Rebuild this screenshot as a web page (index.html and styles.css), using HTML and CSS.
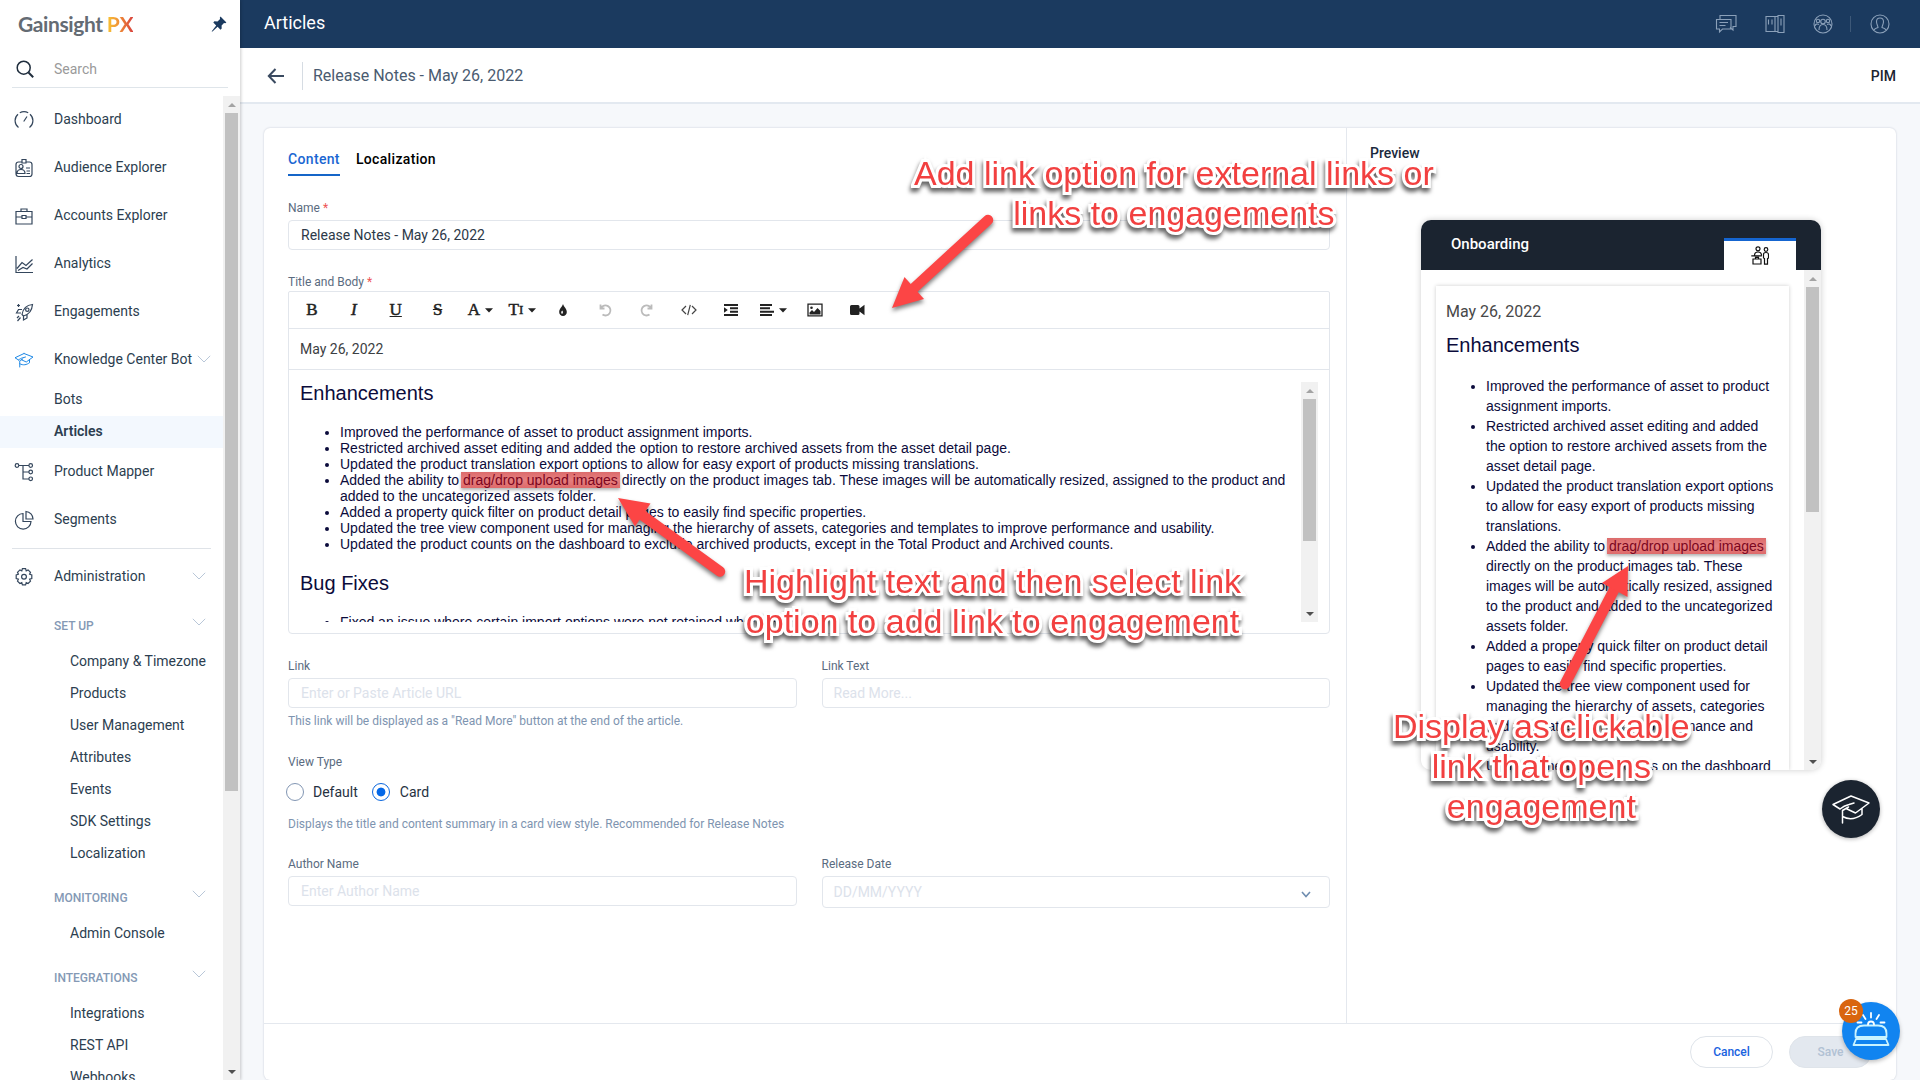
FILE: index.html
```html
<!DOCTYPE html>
<html lang="en">
	<head>
		<meta charset="UTF-8" />
		<meta name="viewport" content="width=device-width, initial-scale=1.0" />
		<title>Articles - Gainsight PX</title>
		<link rel="stylesheet" href="styles.css" />
	</head>
	<body>
		<!-- shared shapes -->
		<svg class="defs" width="0" height="0">
			<symbol id="chevron" viewBox="0 0 14 8">
				<path d="M.8.8 7 7 13.2.8" fill="none" stroke="currentColor" stroke-width="1" />
			</symbol>
			<symbol id="caret" viewBox="0 0 8 5">
				<path d="M0 .3h8L4 4.6z" fill="currentColor" />
			</symbol>
			<symbol id="cap" viewBox="0 0 40 30">
				<path d="M20 2 38 9 24.500 19 15 14.500M20 2 2 10.500 9 15M9 15c3-2.500 5-3.500 9-4.500l5-1.500M11.500 29V16.500l6-3.500M11.500 22.500c7 4 14 2 19.500-2V14.500" fill="none" stroke="currentColor" stroke-linejoin="round" stroke-linecap="round" />
			</symbol>
		</svg>

		<aside class="sidebar">
			<div class="brand">
				<div class="logo">Gainsight<span>PX</span></div>
				<svg width="16" height="16" viewBox="0 0 16 16" fill="#1b3a5f">
					<path d="M9.500.6 15.400 6.500 14.200 7.200 13 6.900 10.600 9.500 10.700 12.600 9.500 13.700 6.600 10.800 1.500 15.500.6 15.400 5.200 9.400 2.300 6.500 3.400 5.300 6.500 5.400 9.100 3 8.800 1.800z" />
				</svg>
			</div>
			<div class="search">
				<svg width="18" height="18" viewBox="0 0 18 18" fill="none" stroke="#1f2d3d" stroke-width="1.500">
					<circle cx="7.700" cy="7.700" r="6.500" />
					<path d="m12.500 12.500 4.700 4.700" stroke-width="2" />
				</svg>
				<span>Search</span>
			</div>
			<div class="sidebar-body">
				<nav class="nav">
					<a class="nav-item">
						<svg class="icon" viewBox="0 0 20 20"><path d="M4.500 17.500A8.600 8.600 0 0 1 4 4.200M5.800 2.800a8.600 8.600 0 0 1 8.400 0M16 4.200a8.600 8.600 0 0 1-.5 13.300M9.700 11.500l3.300-5" /></svg>
						Dashboard
					</a>
					<a class="nav-item">
						<svg class="icon" viewBox="0 0 20 20"><path d="M8 4H4.500C3 4 2 5 2 6.500v9C2 17 3 18.500 4.500 18.500h11c1.500 0 2.500-1 2.500-2.500V6.500C18 5 17 4 15.500 4H12M8 1.500h4V5H8zM3 15.500c0-3 1.500-4 4-4s4 1 4 4zM12 10h4M12.500 13H16M12.500 15.500H16" /><circle cx="7" cy="8.500" r="2" /></svg>
						Audience Explorer
					</a>
					<a class="nav-item">
						<svg class="icon" viewBox="0 0 20 20"><path d="M2 5.500h16V18H2zM7 5.500V3h6v2.500M2 11h6M12 11h6M8 9.500h4v3H8z" /></svg>
						Accounts Explorer
					</a>
					<a class="nav-item">
						<svg class="icon" viewBox="0 0 20 20"><path d="M2 2v16.500h17M3 14.500 8 8.500l4 3 6.500-6M4 16.500l5-3 4 1.500 5.500-5.500" /></svg>
						Analytics
					</a>
					<a class="nav-item">
						<svg class="icon" viewBox="0 0 20 20"><path d="M8 12.500C9 7 12.500 3 18.500 2.500 18 8.500 15 12.500 9.500 14zM8 7.500H4.500L2.500 11H7M13 12.500v3.500l-3.500 2v-4M5 14l-2 2M6.500 15.500 3.500 19M3 3.500h3M4.500 2v3" /><circle cx="13.300" cy="7.700" r="1.700" /></svg>
						Engagements
					</a>
					<a class="nav-item">
						<svg class="icon blue"><use href="#cap" y="2" height="16" width="20" /></svg>
						Knowledge Center Bot
						<svg class="chev near"><use href="#chevron" /></svg>
					</a>
					<a class="nav-sub">Bots</a>
					<a class="nav-sub active">Articles</a>
					<a class="nav-item">
						<svg class="icon" viewBox="0 0 20 20"><path d="M5 3.500h10M9 3.500V17h6M9 10h6" /><circle cx="3" cy="3.500" r="1.800" /><circle cx="16.700" cy="3.500" r="1.800" /><circle cx="16.700" cy="10" r="1.800" /><circle cx="16.700" cy="16.800" r="1.800" /></svg>
						Product Mapper
					</a>
					<a class="nav-item">
						<svg class="icon" viewBox="0 0 20 20"><path d="M9 3.500a7.800 7.800 0 1 0 8 8H9z" /><path d="M12 1.500V9h7a7.500 7.500 0 0 0-7-7.500z" /></svg>
						Segments
					</a>
					<hr />
					<a class="nav-item admin">
						<svg class="icon" viewBox="0 0 20 20"><path d="M8.400 1.700h3.200l.6 2.100 1.900-.9 2.400 2.400-.9 1.900 2.200.7v3.600l-2.200.7.9 1.900-2.400 2.400-1.900-.9-.6 2.200H8.400l-.6-2.200-1.900.9-2.400-2.400.9-1.900-2.200-.7V7.900l2.200-.7-.9-1.900 2.400-2.400 1.900.9z" /><circle cx="10" cy="9.700" r="2.400" /></svg>
						Administration
						<svg class="chev"><use href="#chevron" /></svg>
					</a>
					<div class="nav-head first">SET UP <svg class="chev"><use href="#chevron" /></svg></div>
					<a class="nav-sub deep">Company &amp; Timezone</a>
					<a class="nav-sub deep">Products</a>
					<a class="nav-sub deep">User Management</a>
					<a class="nav-sub deep">Attributes</a>
					<a class="nav-sub deep">Events</a>
					<a class="nav-sub deep">SDK Settings</a>
					<a class="nav-sub deep">Localization</a>
					<div class="nav-head">MONITORING <svg class="chev"><use href="#chevron" /></svg></div>
					<a class="nav-sub deep">Admin Console</a>
					<div class="nav-head">INTEGRATIONS <svg class="chev"><use href="#chevron" /></svg></div>
					<a class="nav-sub deep">Integrations</a>
					<a class="nav-sub deep">REST API</a>
					<a class="nav-sub deep">Webhooks</a>
				</nav>
				<div class="scrollbar"><i class="up"></i><b style="height: 678px"></b><i class="down"></i></div>
			</div>
		</aside>

		<main class="main">
			<header class="topbar">
				<h1>Articles</h1>
				<div class="topbar-icons">
					<svg width="22" height="20" viewBox="0 0 22 20"><path d="M5 5V1.500h16v11h-3V16l-3-2.500M1.500 5.500H16v9.500H7.500L4.500 18v-3h-3zM4.500 8.500h8.500M4.500 11.500h6" /></svg>
					<svg width="20" height="20" viewBox="0 0 20 20"><path d="M1 2.500h9v15H1zM10 2.500h3v15h-3M13 1.500h6v17h-6zM3.500 5.500v5M7 5.500v5M16 4.500v7" /></svg>
					<svg width="20" height="20" viewBox="0 0 20 20"><circle cx="10" cy="10" r="9" /><circle cx="10" cy="7.500" r="2.300" /><circle cx="5" cy="7" r="1.700" /><circle cx="15" cy="7" r="1.700" /><path d="M6 16c0-4 1.500-5.500 4-5.500s4 1.500 4 5.500M2 12c.5-2 2-2.500 4-1.500M18 12c-.5-2-2-2.500-4-1.500" /></svg>
					<span class="sep"></span>
					<svg width="20" height="20" viewBox="0 0 20 20"><circle cx="10" cy="10" r="9" /><path d="M10 4c-2.300 0-3.500 1.500-3.500 3.800S8 12 8 13.500C6 14 4.500 14.500 4 16M10 4c2.300 0 3.500 1.500 3.500 3.800S12 12 12 13.500c2 .5 3.500 1 4 2.500" /></svg>
				</div>
			</header>
			<div class="crumbs">
				<svg width="18" height="16" viewBox="0 0 18 16" fill="none" stroke="#3a4a60" stroke-width="2"><path d="M17 8H2M8.500 1 1.800 8l6.700 7" /></svg>
				<span class="crumb-title">Release Notes - May 26, 2022</span>
				<span class="tenant">PIM</span>
			</div>

			<section class="card">
				<div class="columns">
					<div class="form">
						<div class="tabs">
							<a class="tab active">Content</a>
							<a class="tab">Localization</a>
						</div>

						<label class="label name-label">Name <em>*</em></label>
						<div class="input">Release Notes - May 26, 2022</div>

						<label class="label">Title and Body <em>*</em></label>
						<div class="editor">
							<div class="toolbar">
								<span class="tool serif">B</span>
								<span class="tool serif"><i>I</i></span>
								<span class="tool serif"><u>U</u></span>
								<span class="tool serif"><s>S</s></span>
								<span class="tool serif drop">A<svg class="caret"><use href="#caret" /></svg></span>
								<span class="tool serif drop"><span>T<small>I</small></span><svg class="caret"><use href="#caret" /></svg></span>
								<span class="tool"><svg width="10" height="14" viewBox="0 0 10 14"><path d="M5 1c.8 3 3.800 4.500 3.800 8A3.800 3.800 0 0 1 5 13 3.800 3.800 0 0 1 1.200 9C1.200 5.500 4.200 4 5 1z" fill="#222" /><path d="M4.300 7.500c-1.300 1-1.500 2.500-.3 3.500 1.200-.8 1.200-2 .3-3.500z" fill="#fff" /></svg></span>
								<span class="tool faint"><svg width="14" height="14" viewBox="0 0 14 14"><path d="M2.500 1.500v4h4M3 5.200A5 5 0 1 1 4.500 11.500" /></svg></span>
								<span class="tool faint"><svg width="14" height="14" viewBox="0 0 14 14"><path d="M11.500 1.500v4h-4M11 5.200A5 5 0 1 0 9.500 11.500" /></svg></span>
								<span class="tool"><svg width="16" height="12" viewBox="0 0 16 12" fill="none" stroke="#444" stroke-width="1.200"><path d="M5 2 1 6l4 4M11 2l4 4-4 4M9.300.8 6.700 11.200" /></svg></span>
								<span class="tool"><svg width="16" height="14" viewBox="0 0 16 14" fill="#222"><path d="M1 1h14v2H1zM7 4.300h8v2H7zM7 7.700h8v2H7zM1 11h14v2H1zM1 4.300 4.800 7 1 9.700z" /></svg></span>
								<span class="tool drop"><svg width="14" height="14" viewBox="0 0 14 14" fill="#222"><path d="M0 1h12v2H0zM0 4.300h10v2H0zM0 7.700h14v2H0zM0 11h12v2H0z" /></svg><svg class="caret"><use href="#caret" /></svg></span>
								<span class="tool"><svg width="16" height="14" viewBox="0 0 16 14"><path d="M1 1.200h14v11.600H1z" fill="none" stroke="#222" stroke-width="1.300" /><circle cx="4.500" cy="4.700" r="1.300" fill="#222" /><path d="M2.500 11.500V9.500L5 7l2 2 3.500-4L13.500 8v3.500z" fill="#222" /></svg></span>
								<span class="tool"><svg width="16" height="12" viewBox="0 0 16 12" fill="#222"><path d="M2.500 1H9a1.500 1.500 0 0 1 1.500 1.500V4.500L15.500.8v10.400l-5-3.700v2A1.500 1.500 0 0 1 9 11H2.500A1.500 1.500 0 0 1 1 9.500v-7A1.500 1.500 0 0 1 2.500 1z" /></svg></span>
							</div>
							<div class="editor-title">May 26, 2022</div>
							<div class="editor-body">
								<div class="rich">
									<h2>Enhancements</h2>
									<ul>
										<li>Improved the performance of asset to product assignment imports.</li>
										<li>Restricted archived asset editing and added the option to restore archived assets from the asset detail page.</li>
										<li>Updated the product translation export options to allow for easy export of products missing translations.</li>
										<li>Added the ability to <mark>drag/drop upload images</mark> directly on the product images tab. These images will be automatically resized, assigned to the product and added to the uncategorized assets folder.</li>
										<li>Added a property quick filter on product detail pages to easily find specific properties.</li>
										<li>Updated the tree view component used for managing the hierarchy of assets, categories and templates to improve performance and usability.</li>
										<li>Updated the product counts on the dashboard to exclude archived products, except in the Total Product and Archived counts.</li>
									</ul>
									<h2>Bug Fixes</h2>
									<ul>
										<li>Fixed an issue where certain import options were not retained when reviewing.</li>
									</ul>
								</div>
								<div class="scrollbar"><i class="up"></i><b style="height: 142px"></b><i class="down"></i></div>
							</div>
						</div>

						<div class="row">
							<div>
								<label class="label">Link</label>
								<div class="input empty">Enter or Paste Article URL</div>
							</div>
							<div>
								<label class="label">Link Text</label>
								<div class="input empty short">Read More...</div>
							</div>
						</div>
						<p class="hint">This link will be displayed as a "Read More" button at the end of the article.</p>

						<label class="label view-label">View Type</label>
						<div class="radios">
							<span class="radio"></span>Default
							<span class="radio on"></span>Card
						</div>
						<p class="hint view-hint">Displays the title and content summary in a card view style. Recommended for Release Notes</p>

						<div class="row">
							<div>
								<label class="label">Author Name</label>
								<div class="input empty">Enter Author Name</div>
							</div>
							<div>
								<label class="label">Release Date</label>
								<div class="input empty short date">
									DD/MM/YYYY
									<svg width="10" height="7" viewBox="0 0 10 7" fill="none" stroke="#6f8db0" stroke-width="1.600"><path d="m1 1 4 4.500L9 1" /></svg>
								</div>
							</div>
						</div>
					</div>

					<div class="preview">
						<div class="preview-label">Preview</div>
						<div class="bot">
							<div class="bot-head">
								<span>Onboarding</span>
								<div class="bot-tab">
									<svg width="18" height="19" viewBox="0 0 18 19" fill="none" stroke="#111" stroke-width="1.200"><circle cx="7" cy="2.800" r="2" /><circle cx="15" cy="3.500" r="1.800" /><path d="M3.500 9.500C3.500 7 5 6 7 6s3.500 1 3.500 3.500M.3 9.800h10.500M2 13h8v5H2zM4.500 13v-1.700h3V13M12.500 12V8.500C12.500 7 13.500 6.500 15 6.500s2.500.5 2.500 2V12l-1 .5v5.700h-3v-5.700z" /></svg>
								</div>
							</div>
							<div class="bot-body">
								<div class="bot-scroll">
									<div class="rich article">
										<div class="article-title">May 26, 2022</div>
										<h2>Enhancements</h2>
										<ul>
											<li>Improved the performance of asset to product assignment imports.</li>
											<li>Restricted archived asset editing and added the option to restore archived assets from the asset detail page.</li>
											<li>Updated the product translation export options to allow for easy export of products missing translations.</li>
											<li>Added the ability to <mark>drag/drop upload images</mark> directly on the product images tab. These images will be automatically resized, assigned to the product and added to the uncategorized assets folder.</li>
											<li>Added a property quick filter on product detail pages to easily find specific properties.</li>
											<li>Updated the tree view component used for managing the hierarchy of assets, categories and templates to improve performance and usability.</li>
											<li>Updated the product counts on the dashboard to exclude archived products, except in the Total Product and Archived counts.</li>
										</ul>
									</div>
								</div>
								<div class="scrollbar"><i class="up"></i><b style="height: 225px"></b><i class="down"></i></div>
							</div>
						</div>
						<div class="bot-button"><svg width="40" height="30"><use href="#cap" /></svg></div>
					</div>
				</div>

				<footer class="footer">
					<button class="btn">Cancel</button>
					<button class="btn disabled">Save</button>
				</footer>
			</section>
		</main>

		<!-- floating engagement bell -->
		<div class="bell">
			<svg width="38" height="34" viewBox="0 0 38 34" fill="none" stroke="#fff" stroke-width="1.800" stroke-linecap="round">
				<path d="M3.500 25v-3.500C3.500 16 7 13.500 12 13.500h14c5 0 8.500 2.500 8.500 8V25zM4 27h30l2.500 6h-35z" stroke="#c9f3ff" stroke-linejoin="round" />
				<path d="M16 12.500c0-2 1-3 3-3s3 1 3 3M19 1v4.500M11 3l2.500 4M27 3l-2.500 4M5.500 10.500h4M28.500 10.500h4" />
			</svg>
			<span class="badge">25</span>
		</div>

		<!-- annotations -->
		<div class="notes">
			<svg width="1920" height="1080" viewBox="0 0 1920 1080" fill="#fc4545" stroke="#fc4545">
				<g><path d="M914 288 988 220" stroke-width="10.500" stroke-linecap="round" /><path d="M892 308 904.500 277 924 299z" stroke="none" /></g>
				<g><path d="m642 515 78 56.500" stroke-width="10.500" stroke-linecap="round" /><path d="m618 498 32.500 5.500-15.500 23z" stroke="none" /></g>
				<g><path d="m1615 588-50 96" stroke-width="10.500" stroke-linecap="round" /><path d="m1628 566-26 17 25.500 14z" stroke="none" /></g>
			</svg>
			<p class="note note-add">Add link option for external links or<br />links to engagements</p>
			<p class="note note-highlight">Highlight text and then select link<br />option to add link to engagement</p>
			<p class="note note-display">Display as clickable<br />link that opens<br />engagement</p>
		</div>
	</body>
</html>
```
FILE: styles.css
```css
* {
	box-sizing: border-box;
}
body {
	display: flex;
	width: 1920px;
	height: 1080px;
	margin: 0;
	overflow: hidden;
	position: relative;
	background: #f6f8fb;
	color: #2c3e50;
	font: 14px/20px Roboto, sans-serif;
}
h1,
h2,
p,
ul {
	margin: 0;
}
svg {
	flex: none;
}
.defs {
	position: absolute;
}

/* sidebar */
.sidebar {
	width: 240px;
	height: 1080px;
	display: flex;
	flex-direction: column;
	background: #fff;
	box-shadow: 1px 0 3px rgba(0, 0, 0, 0.2);
	position: relative;
	z-index: 1;
}
.brand {
	height: 48px;
	padding: 0 13px 0 18px;
	display: flex;
	align-items: center;
	justify-content: space-between;
}
.logo {
	font: bold 21px/24px Lato, sans-serif;
	letter-spacing: -0.4px;
	color: #646b73;
}
.logo span {
	margin-left: 4px;
	letter-spacing: 0;
	background: linear-gradient(90deg, #f8c534, #ef8a36 50%, #d8413d);
	-webkit-background-clip: text;
	background-clip: text;
	color: transparent;
}
.search {
	height: 40px;
	margin: 0 12px 8px;
	padding: 2px 0 0 4px;
	display: flex;
	align-items: center;
	gap: 20px;
	border-bottom: 1px solid #dfe5ea;
	color: #9a9a9a;
}
.sidebar-body {
	flex: 1;
	min-height: 0;
	display: flex;
}
.nav {
	flex: 1;
	overflow: hidden;
	white-space: nowrap;
}
.nav-item {
	height: 48px;
	padding: 0 17px 2px 14px;
	display: flex;
	align-items: center;
}
.icon {
	width: 20px;
	height: 20px;
	margin: 2px 20px 0 0;
	fill: none;
	stroke: #34465c;
	stroke-width: 1.2;
}
.icon.blue {
	color: #1e88e5;
	stroke: none;
	stroke-width: 2;
}
.chev {
	width: 14px;
	height: 8px;
	margin-left: auto;
	color: #b9c7d8;
}
.chev.near {
	margin-right: -5px;
}
.nav-sub {
	display: block;
	height: 32px;
	padding-left: 54px;
	line-height: 30px;
}
.nav-sub.deep {
	padding-left: 70px;
}
.nav-sub.active {
	background: #f3f8fe;
	font-weight: 600;
}
.nav hr {
	margin: 4px 12px;
	border: 0;
	border-top: 1px solid #dfe3e8;
}
.nav-head {
	height: 48px;
	padding: 18px 17px 0 54px;
	display: flex;
	font-size: 12px;
	font-weight: 500;
	color: #8499b5;
}
.nav-head.first {
	height: 45px;
	padding-top: 15px;
}
.nav-head .chev {
	margin-top: 2px;
}

/* scrollbars */
.scrollbar {
	width: 17px;
	padding: 0 2px;
	display: flex;
	flex-direction: column;
	flex: none;
	background: #f1f1f1;
}
.scrollbar b {
	background: #c1c1c1;
}
.scrollbar i {
	height: 17px;
	display: flex;
	align-items: center;
	justify-content: center;
}
.scrollbar i::before {
	content: "";
	border: 4px solid transparent;
	border-top-width: 0;
	border-bottom-color: #a3a3a3;
}
.scrollbar .down {
	margin-top: auto;
}
.scrollbar .down::before {
	border-top: 4px solid #505050;
	border-bottom-width: 0;
}

/* header */
.main {
	flex: 1;
	display: flex;
	flex-direction: column;
	min-width: 0;
}
.topbar {
	height: 48px;
	padding: 0 30px 0 24px;
	display: flex;
	align-items: center;
	justify-content: space-between;
	background: #1b3a5f;
}
.topbar h1 {
	margin-top: -2px;
	font-size: 18px;
	font-weight: 400;
	color: #fff;
}
.topbar-icons {
	display: flex;
	align-items: center;
	gap: 28px;
	fill: none;
	stroke: #8ba0b9;
	stroke-width: 1.1;
}
.topbar-icons .sep {
	width: 1px;
	height: 16px;
	margin: 0 -9px 0 -11px;
	background: #3d5878;
}
.crumbs {
	height: 56px;
	padding: 1px 24px 0 27px;
	display: flex;
	align-items: center;
	background: #fff;
	border-bottom: 2px solid #e3e9f0;
}
.crumb-title {
	margin-left: 17px;
	padding-left: 10px;
	border-left: 1px solid #d6dce3;
	font-size: 16px;
	line-height: 28px;
	color: #4a5b70;
}
.tenant {
	margin-left: auto;
	color: #1b2430;
	font-weight: 500;
}

/* card */
.card {
	height: 952px;
	margin: 24px 24px 0;
	display: flex;
	flex-direction: column;
	background: #fff;
	border-radius: 6px;
	box-shadow: 0 0 2px rgba(40, 60, 90, 0.25);
}
.columns {
	flex: 1;
	min-height: 0;
	display: flex;
}
.form {
	width: 1083px;
	padding: 20px 16px 0 24px;
	border-right: 1px solid #e4e8ee;
}
.tabs {
	display: flex;
	gap: 16px;
}
.tab {
	height: 28px;
	line-height: 22px;
	font-weight: 500;
	letter-spacing: 0.34px;
	color: #000;
}
.tab.active {
	color: #1a66d2;
	border-bottom: 2px solid #1565c8;
}
.label {
	display: block;
	margin: 24px 0 4px;
	font-size: 12px;
	line-height: 16px;
	color: #5a6b80;
}
.label em {
	font-style: normal;
	color: #ee5555;
}
.input {
	height: 30px;
	padding: 0 12px;
	border: 1px solid #e2e6ec;
	border-radius: 4px;
	line-height: 28px;
	color: #2d3948;
}
.input.empty {
	color: #dce2eb;
}
.input.short {
	padding-left: 11px;
}
.date {
	height: 32px;
	padding-right: 18px;
	display: flex;
	justify-content: space-between;
	align-items: center;
}
.date svg {
	margin-top: 4px;
}
.editor {
	height: 343px;
	margin-top: -3px;
	display: flex;
	flex-direction: column;
	border: 1px solid #e2e6ec;
	border-radius: 2px 2px 4px 4px;
}
.toolbar {
	height: 37px;
	padding-left: 2px;
	display: flex;
	border-bottom: 1px solid #e2e6ec;
	color: #222;
}
.tool {
	width: 41.9px;
	display: flex;
	align-items: center;
	justify-content: center;
}
.serif {
	font: 17px/20px "Liberation Serif", serif;
	-webkit-text-stroke: 0.5px #222;
}
.serif small {
	font-size: 13px;
	vertical-align: 1px;
}
.drop {
	gap: 5px;
	padding-left: 2px;
}
.faint svg {
	fill: none;
	stroke: #bbb;
	stroke-width: 1.8;
}
.caret {
	width: 8px;
	height: 5px;
}
.editor-title {
	height: 41px;
	padding-left: 11px;
	line-height: 40px;
	border-bottom: 1px solid #e2e6ec;
	color: #3c4043;
}
.editor-body {
	height: 252px;
	padding: 12px 11px 0;
	display: flex;
}
.rich {
	flex: 1;
	overflow: hidden;
	font: 14px/16px "Liberation Sans", Arial, sans-serif;
	color: #0b0b3b;
}
.rich h2 {
	margin-bottom: 19px;
	font-size: 20px;
	line-height: 23px;
	font-weight: 400;
}
.rich ul {
	margin-bottom: 20px;
	padding-left: 40px;
}
.rich mark {
	margin: 0 -2px;
	padding: 0 2px;
	background: linear-gradient(#dc6b6b, #e57f7f 50%, #de6a6a);
	box-shadow: 0 2px 3px rgba(0, 0, 0, 0.3);
	color: #7c0620;
}
.row {
	display: grid;
	grid-template-columns: 1fr 1fr;
	gap: 25px;
}
.hint {
	margin-top: 5px;
	font-size: 12px;
	line-height: 16px;
	color: #7e94b0;
}
.view-label {
	margin: 25px 0 12px;
}
.radios {
	height: 20px;
	margin-left: -2px;
	display: flex;
	align-items: center;
	color: #26313f;
}
.radio {
	width: 18px;
	height: 18px;
	margin-right: 9px;
	border: 1px solid #8296b3;
	border-radius: 50%;
}
.radio.on {
	margin: 0 10px 0 14px;
	border-color: #0a66dd;
	background: radial-gradient(#0468e8 4px, #fff 4.8px);
}
.view-hint {
	margin-top: 14px;
}

/* preview */
.preview {
	flex: 1;
	padding: 15px 0 0 23px;
}
.preview-label {
	color: #1b2a3d;
	font-weight: 500;
}
.bot {
	width: 400px;
	height: 550px;
	margin: 57px 0 0 51px;
	overflow: hidden;
	border-radius: 10px;
	box-shadow: 0 0 6px rgba(0, 0, 0, 0.2);
}
.bot-head {
	height: 50px;
	padding: 0 25px 0 30px;
	display: flex;
	align-items: center;
	justify-content: space-between;
	background: #1b2430;
	color: #fff;
	font-size: 15px;
	font-weight: 500;
}
.bot-head span {
	margin-top: -2px;
}
.bot-tab {
	width: 72px;
	height: 32px;
	align-self: flex-end;
	display: flex;
	align-items: center;
	justify-content: center;
	background: #fff;
	border-top: 3px solid #1565d0;
}
.bot-body {
	height: 500px;
	display: flex;
}
.bot-scroll {
	flex: 1;
	padding: 16px 15px 0;
}
.article {
	height: 484px;
	padding: 16px 12px 0 10px;
	line-height: 20px;
	box-shadow: 0 0 4px rgba(0, 0, 0, 0.2);
}
.article-title {
	margin-bottom: 12px;
	font: 16px/20px Roboto, sans-serif;
	color: #484848;
}
.bot-button {
	width: 58px;
	height: 58px;
	margin: 10px 0 0 452px;
	display: flex;
	align-items: center;
	justify-content: center;
	border-radius: 50%;
	background: #1b2430;
	color: #fff;
	stroke-width: 1.5;
	box-shadow: 0 1px 4px rgba(0, 0, 0, 0.3);
}

.footer {
	height: 57px;
	padding: 12px 24px 0;
	display: flex;
	justify-content: flex-end;
	gap: 16px;
	border-top: 1px solid #e4e8ee;
}
.btn {
	width: 83px;
	height: 32px;
	padding: 0;
	border: 1px solid #dfe4ea;
	border-radius: 16px;
	background: #fff;
	font: 500 12px Roboto, sans-serif;
	color: #1a63e0;
}
.btn.disabled {
	background: #e3e8ef;
	color: #b1c1d4;
}

/* floating things */
.bell {
	position: absolute;
	left: 1842px;
	top: 1002px;
	width: 58px;
	height: 58px;
	padding-bottom: 4px;
	display: flex;
	align-items: center;
	justify-content: center;
	border-radius: 50%;
	background: #1184f0;
	box-shadow: 0 2px 4px rgba(0, 0, 0, 0.25);
	z-index: 2;
}
.badge {
	position: absolute;
	left: -3px;
	top: -3px;
	width: 24px;
	height: 24px;
	border-radius: 50%;
	background: #d9650f;
	color: #fff;
	font-size: 12px;
	line-height: 24px;
	text-align: center;
}
.notes {
	position: absolute;
	left: 0;
	top: 0;
	z-index: 3;
}
.notes svg {
	display: block;
}
.notes g {
	filter: drop-shadow(0 3px 2px rgba(0, 0, 0, 0.5));
}
.note {
	position: absolute;
	font: 34px/40px "Liberation Sans", Arial, sans-serif;
	text-align: center;
	white-space: nowrap;
	color: #f24040;
	-webkit-text-stroke: 6px #fff;
	paint-order: stroke fill;
	filter: drop-shadow(-1px 4px 2px rgba(0, 0, 0, 0.6));
}
.note-add {
	left: 914px;
	top: 153px;
}
.note-highlight {
	left: 744px;
	top: 561px;
}
.note-display {
	left: 1393px;
	top: 706px;
}
```
